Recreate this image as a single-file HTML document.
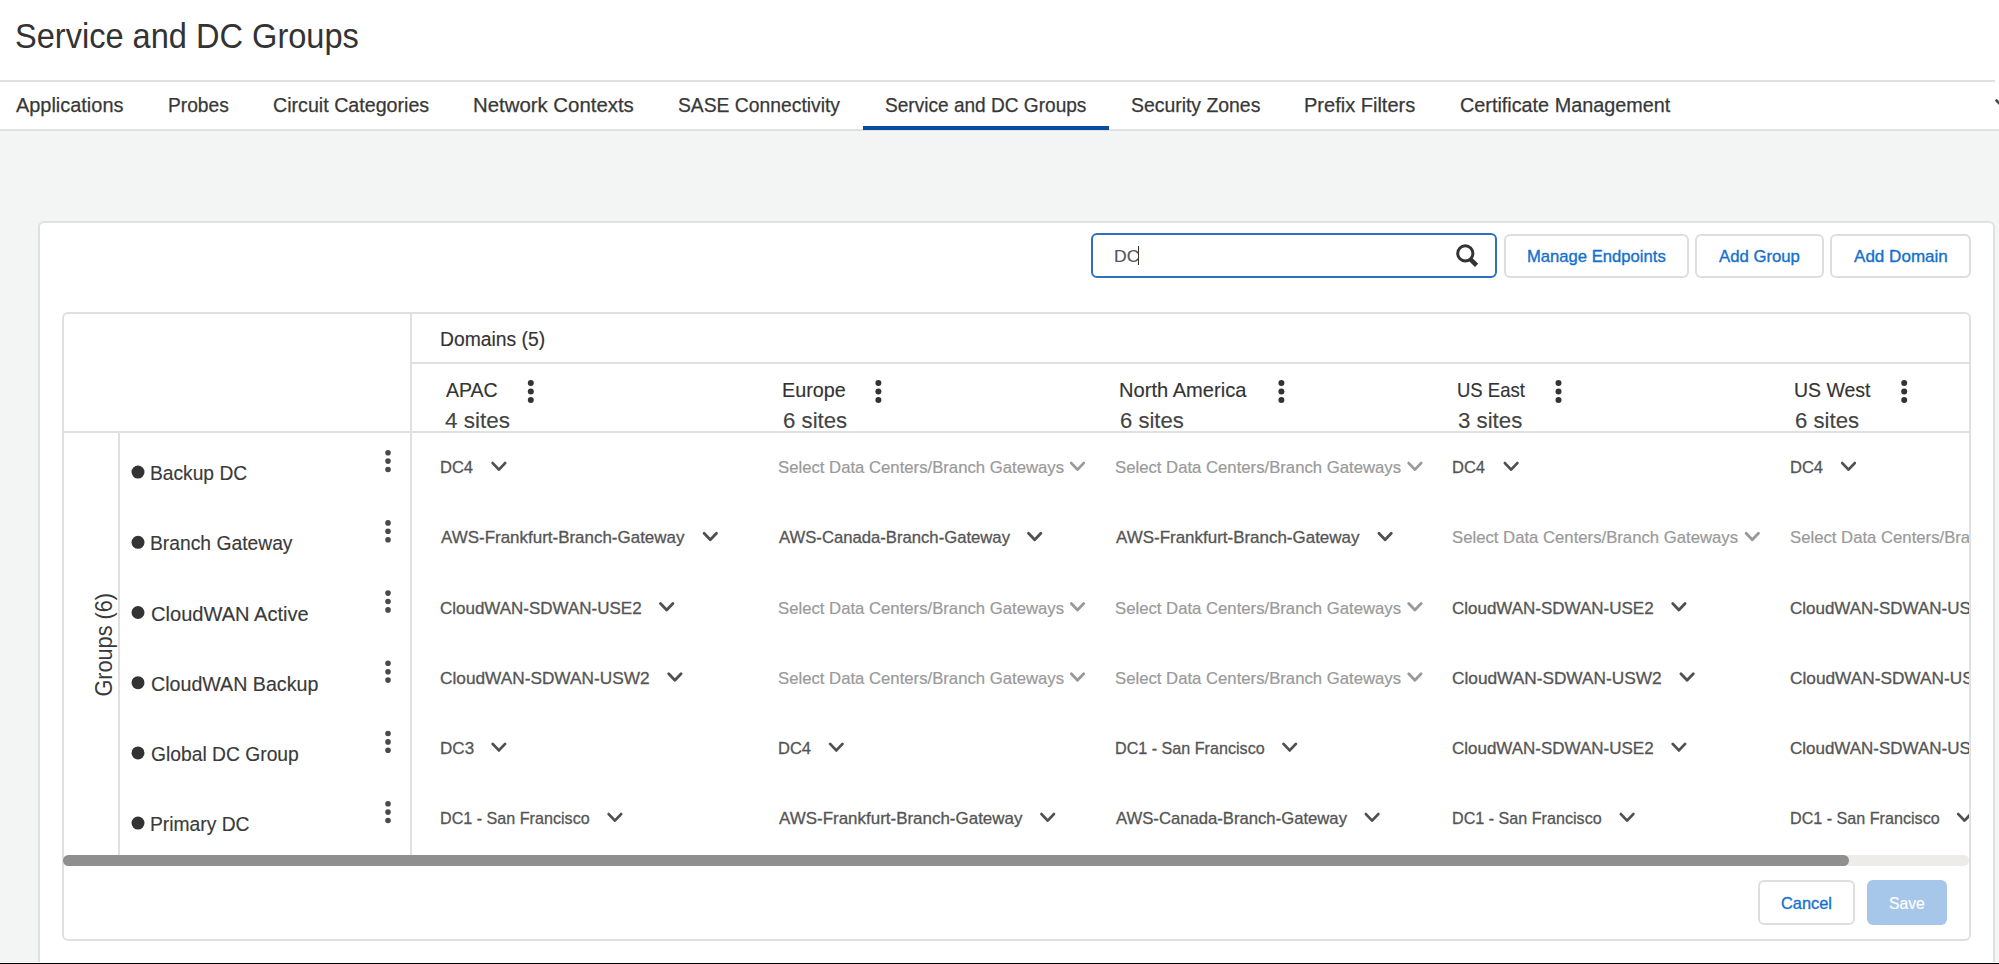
<!DOCTYPE html>
<html><head><meta charset="utf-8"><style>
html,body{margin:0;padding:0;width:1999px;height:964px;overflow:hidden;background:#f3f4f4;position:relative;font-family:'Liberation Sans', sans-serif}
.t{position:absolute;white-space:nowrap;line-height:1;transform-origin:0 0}
.box{position:absolute;box-sizing:border-box}
svg{position:absolute;left:0;top:0}
</style></head><body>
<div class=box style="left:0;top:0;width:1999px;height:130px;background:#fff"></div>
<div class=box style="left:0;top:80px;width:1995px;height:2px;background:#dfe1e1"></div>
<div class=box style="left:0;top:129px;width:1999px;height:2px;background:#dfe1e1"></div>
<div class=box style="left:863px;top:126px;width:246px;height:3.6px;background:#0a4aa0"></div>
<div class=box style="left:37.6px;top:220.6px;width:1957.4px;height:760px;background:#fff;border:2px solid #dfe1e1;border-radius:6px"></div>
<div class=box style="left:1090.8px;top:233px;width:406.3px;height:45px;border:2px solid #2f6fbd;border-radius:6px;background:#fff"></div>
<div class=box style="left:1503.5px;top:233.6px;width:185px;height:44px;border:2px solid #dedede;border-radius:6px"></div>
<div class=box style="left:1695px;top:233.6px;width:129px;height:44px;border:2px solid #dedede;border-radius:6px"></div>
<div class=box style="left:1830px;top:233.6px;width:140.5px;height:44px;border:2px solid #dedede;border-radius:6px"></div>
<div class=box style="left:61.7px;top:311.7px;width:1909.3px;height:629px;border:2px solid #dfe1e1;border-radius:6px"></div>
<div class=box style="left:410.3px;top:313px;width:2px;height:542px;background:#dfe1e1"></div>
<div class=box style="left:411px;top:362.3px;width:1559px;height:2px;background:#dfe1e1"></div>
<div class=box style="left:62px;top:431px;width:1908px;height:2px;background:#dfe1e1"></div>
<div class=box style="left:117.5px;top:432px;width:2px;height:423px;background:#dfe1e1"></div>
<div class=box style="left:63px;top:855px;width:1906px;height:11px;background:#edece9;border-radius:6px"></div>
<div class=box style="left:63px;top:855px;width:1786px;height:11px;background:#8f8f8f;border-radius:6px"></div>
<div class=box style="left:1757.9px;top:879.8px;width:97.2px;height:45.2px;border:2px solid #dedede;border-radius:6px;background:#fff"></div>
<div class=box style="left:1866.8px;top:880.2px;width:80px;height:44.5px;border-radius:6px;background:#a7c7ea"></div>
<div class=box style="left:1137.5px;top:246px;width:1.3px;height:19px;background:#333"></div>
<div class=box style="left:0;top:962px;width:1999px;height:1px;background:#fff"></div>
<div class=box style="left:0;top:963px;width:1999px;height:1px;background:#000"></div>
<div id=cells style="position:absolute;left:0;top:0;width:1969px;height:964px;overflow:hidden">
<div class=t style="left:14.64px;top:18px;font-size:35px;color:#333;-webkit-text-stroke:0px #333;transform:scaleX(0.9303)">Service and DC Groups</div>
<div class=t style="left:15.80px;top:95px;font-size:20.5px;color:#383838;-webkit-text-stroke:0.25px #383838;transform:scaleX(0.9718)">Applications</div>
<div class=t style="left:168.13px;top:95px;font-size:20.5px;color:#383838;-webkit-text-stroke:0.25px #383838;transform:scaleX(0.9355)">Probes</div>
<div class=t style="left:273.34px;top:95px;font-size:20.5px;color:#383838;-webkit-text-stroke:0.25px #383838;transform:scaleX(0.9584)">Circuit Categories</div>
<div class=t style="left:473.01px;top:95px;font-size:20.5px;color:#383838;-webkit-text-stroke:0.25px #383838;transform:scaleX(0.9937)">Network Contexts</div>
<div class=t style="left:678.06px;top:95px;font-size:20.5px;color:#383838;-webkit-text-stroke:0.25px #383838;transform:scaleX(0.9415)">SASE Connectivity</div>
<div class=t style="left:885.07px;top:95px;font-size:20.5px;color:#383838;-webkit-text-stroke:0.25px #383838;transform:scaleX(0.9302)">Service and DC Groups</div>
<div class=t style="left:1131.05px;top:95px;font-size:20.5px;color:#383838;-webkit-text-stroke:0.25px #383838;transform:scaleX(0.9459)">Security Zones</div>
<div class=t style="left:1303.95px;top:95px;font-size:20.5px;color:#383838;-webkit-text-stroke:0.25px #383838;transform:scaleX(0.9766)">Prefix Filters</div>
<div class=t style="left:1459.73px;top:95px;font-size:20.5px;color:#383838;-webkit-text-stroke:0.25px #383838;transform:scaleX(0.9659)">Certificate Management</div>
<div class=t style="left:1526.52px;top:248px;font-size:17px;color:#1470cc;-webkit-text-stroke:0.35px #1470cc;transform:scaleX(0.9786)">Manage Endpoints</div>
<div class=t style="left:1719.20px;top:248px;font-size:17px;color:#1470cc;-webkit-text-stroke:0.35px #1470cc;transform:scaleX(0.9841)">Add Group</div>
<div class=t style="left:1854.10px;top:248px;font-size:17px;color:#1470cc;-webkit-text-stroke:0.35px #1470cc;transform:scaleX(1.0033)">Add Domain</div>
<div class=t style="left:1114.10px;top:249px;font-size:16px;color:#555;-webkit-text-stroke:0.15px #555;transform:scaleX(1.0952)">DC</div>
<div class=t style="left:439.67px;top:329px;font-size:20px;color:#333;-webkit-text-stroke:0.15px #333;transform:scaleX(0.9651)">Domains (5)</div>
<div class=t style="left:445.60px;top:380px;font-size:20.3px;color:#333;-webkit-text-stroke:0.15px #333;transform:scaleX(0.9623)">APAC</div>
<div class=t style="left:444.60px;top:410px;font-size:22.5px;color:#444;-webkit-text-stroke:0.15px #444;transform:scaleX(0.9984)">4 sites</div>
<div class=t style="left:781.85px;top:380px;font-size:20.3px;color:#333;-webkit-text-stroke:0.15px #333;transform:scaleX(0.9742)">Europe</div>
<div class=t style="left:782.81px;top:410px;font-size:22.5px;color:#444;-webkit-text-stroke:0.15px #444;transform:scaleX(0.9873)">6 sites</div>
<div class=t style="left:1119.32px;top:380px;font-size:20.3px;color:#333;-webkit-text-stroke:0.15px #333;transform:scaleX(0.9913)">North America</div>
<div class=t style="left:1120.32px;top:410px;font-size:22.5px;color:#444;-webkit-text-stroke:0.15px #444;transform:scaleX(0.9794)">6 sites</div>
<div class=t style="left:1456.77px;top:380px;font-size:20.3px;color:#333;-webkit-text-stroke:0.15px #333;transform:scaleX(0.9125)">US East</div>
<div class=t style="left:1457.61px;top:410px;font-size:22.5px;color:#444;-webkit-text-stroke:0.15px #444;transform:scaleX(0.9889)">3 sites</div>
<div class=t style="left:1794.08px;top:380px;font-size:20.3px;color:#333;-webkit-text-stroke:0.15px #333;transform:scaleX(0.9610)">US West</div>
<div class=t style="left:1795.01px;top:410px;font-size:22.5px;color:#444;-webkit-text-stroke:0.15px #444;transform:scaleX(0.9857)">6 sites</div>
<div class=t style="left:150.33px;top:463px;font-size:20.5px;color:#3a3a3a;-webkit-text-stroke:0.15px #3a3a3a;transform:scaleX(0.9366)">Backup DC</div>
<div class=t style="left:150.32px;top:533px;font-size:20.5px;color:#3a3a3a;-webkit-text-stroke:0.15px #3a3a3a;transform:scaleX(0.9403)">Branch Gateway</div>
<div class=t style="left:151.22px;top:604px;font-size:20.5px;color:#3a3a3a;-webkit-text-stroke:0.15px #3a3a3a;transform:scaleX(0.9799)">CloudWAN Active</div>
<div class=t style="left:151.24px;top:674px;font-size:20.5px;color:#3a3a3a;-webkit-text-stroke:0.15px #3a3a3a;transform:scaleX(0.9578)">CloudWAN Backup</div>
<div class=t style="left:151.26px;top:744px;font-size:20.5px;color:#3a3a3a;-webkit-text-stroke:0.15px #3a3a3a;transform:scaleX(0.9400)">Global DC Group</div>
<div class=t style="left:150.32px;top:814px;font-size:20.5px;color:#3a3a3a;-webkit-text-stroke:0.15px #3a3a3a;transform:scaleX(0.9398)">Primary DC</div>
<div class=t style="left:440.13px;top:459px;font-size:17px;color:#555;-webkit-text-stroke:0.3px #555;transform:scaleX(0.9697)">DC4</div>
<div class=t style="left:777.52px;top:459px;font-size:17px;color:#9a9a9a;-webkit-text-stroke:0.22px #9a9a9a;transform:scaleX(0.9827)">Select Data Centers/Branch Gateways</div>
<div class=t style="left:1114.92px;top:459px;font-size:17px;color:#9a9a9a;-webkit-text-stroke:0.22px #9a9a9a;transform:scaleX(0.9827)">Select Data Centers/Branch Gateways</div>
<div class=t style="left:1452.33px;top:459px;font-size:17px;color:#555;-webkit-text-stroke:0.3px #555;transform:scaleX(0.9697)">DC4</div>
<div class=t style="left:1789.73px;top:459px;font-size:17px;color:#555;-webkit-text-stroke:0.3px #555;transform:scaleX(0.9697)">DC4</div>
<div class=t style="left:441.10px;top:529px;font-size:17px;color:#555;-webkit-text-stroke:0.3px #555;transform:scaleX(0.9975)">AWS-Frankfurt-Branch-Gateway</div>
<div class=t style="left:778.50px;top:529px;font-size:17px;color:#555;-webkit-text-stroke:0.3px #555;transform:scaleX(0.9804)">AWS-Canada-Branch-Gateway</div>
<div class=t style="left:1115.90px;top:529px;font-size:17px;color:#555;-webkit-text-stroke:0.3px #555;transform:scaleX(0.9975)">AWS-Frankfurt-Branch-Gateway</div>
<div class=t style="left:1452.32px;top:529px;font-size:17px;color:#9a9a9a;-webkit-text-stroke:0.22px #9a9a9a;transform:scaleX(0.9827)">Select Data Centers/Branch Gateways</div>
<div class=t style="left:1789.72px;top:529px;font-size:17px;color:#9a9a9a;-webkit-text-stroke:0.22px #9a9a9a;transform:scaleX(0.9827)">Select Data Centers/Branch Gateways</div>
<div class=t style="left:440.10px;top:600px;font-size:17px;color:#555;-webkit-text-stroke:0.3px #555;transform:scaleX(0.9990)">CloudWAN-SDWAN-USE2</div>
<div class=t style="left:777.52px;top:600px;font-size:17px;color:#9a9a9a;-webkit-text-stroke:0.22px #9a9a9a;transform:scaleX(0.9827)">Select Data Centers/Branch Gateways</div>
<div class=t style="left:1114.92px;top:600px;font-size:17px;color:#9a9a9a;-webkit-text-stroke:0.22px #9a9a9a;transform:scaleX(0.9827)">Select Data Centers/Branch Gateways</div>
<div class=t style="left:1452.30px;top:600px;font-size:17px;color:#555;-webkit-text-stroke:0.3px #555;transform:scaleX(0.9990)">CloudWAN-SDWAN-USE2</div>
<div class=t style="left:1789.70px;top:600px;font-size:17px;color:#555;-webkit-text-stroke:0.3px #555;transform:scaleX(0.9990)">CloudWAN-SDWAN-USE2</div>
<div class=t style="left:440.09px;top:670px;font-size:17px;color:#555;-webkit-text-stroke:0.3px #555;transform:scaleX(1.0146)">CloudWAN-SDWAN-USW2</div>
<div class=t style="left:777.52px;top:670px;font-size:17px;color:#9a9a9a;-webkit-text-stroke:0.22px #9a9a9a;transform:scaleX(0.9827)">Select Data Centers/Branch Gateways</div>
<div class=t style="left:1114.92px;top:670px;font-size:17px;color:#9a9a9a;-webkit-text-stroke:0.22px #9a9a9a;transform:scaleX(0.9827)">Select Data Centers/Branch Gateways</div>
<div class=t style="left:1452.29px;top:670px;font-size:17px;color:#555;-webkit-text-stroke:0.3px #555;transform:scaleX(1.0146)">CloudWAN-SDWAN-USW2</div>
<div class=t style="left:1789.69px;top:670px;font-size:17px;color:#555;-webkit-text-stroke:0.3px #555;transform:scaleX(1.0146)">CloudWAN-SDWAN-USW2</div>
<div class=t style="left:440.10px;top:740px;font-size:17px;color:#555;-webkit-text-stroke:0.3px #555;transform:scaleX(1.0000)">DC3</div>
<div class=t style="left:777.53px;top:740px;font-size:17px;color:#555;-webkit-text-stroke:0.3px #555;transform:scaleX(0.9697)">DC4</div>
<div class=t style="left:1114.95px;top:740px;font-size:17px;color:#555;-webkit-text-stroke:0.3px #555;transform:scaleX(0.9487)">DC1 - San Francisco</div>
<div class=t style="left:1452.30px;top:740px;font-size:17px;color:#555;-webkit-text-stroke:0.3px #555;transform:scaleX(0.9990)">CloudWAN-SDWAN-USE2</div>
<div class=t style="left:1789.70px;top:740px;font-size:17px;color:#555;-webkit-text-stroke:0.3px #555;transform:scaleX(0.9990)">CloudWAN-SDWAN-USE2</div>
<div class=t style="left:440.15px;top:810px;font-size:17px;color:#555;-webkit-text-stroke:0.3px #555;transform:scaleX(0.9487)">DC1 - San Francisco</div>
<div class=t style="left:778.50px;top:810px;font-size:17px;color:#555;-webkit-text-stroke:0.3px #555;transform:scaleX(0.9975)">AWS-Frankfurt-Branch-Gateway</div>
<div class=t style="left:1115.90px;top:810px;font-size:17px;color:#555;-webkit-text-stroke:0.3px #555;transform:scaleX(0.9804)">AWS-Canada-Branch-Gateway</div>
<div class=t style="left:1452.35px;top:810px;font-size:17px;color:#555;-webkit-text-stroke:0.3px #555;transform:scaleX(0.9487)">DC1 - San Francisco</div>
<div class=t style="left:1789.75px;top:810px;font-size:17px;color:#555;-webkit-text-stroke:0.3px #555;transform:scaleX(0.9487)">DC1 - San Francisco</div>
<div class=t style="left:1781.04px;top:895px;font-size:17px;color:#1470cc;-webkit-text-stroke:0.35px #1470cc;transform:scaleX(0.9627)">Cancel</div>
<div class=t style="left:1888.78px;top:895px;font-size:17px;color:#ffffff;-webkit-text-stroke:0.15px #ffffff;transform:scaleX(0.9216)">Save</div>
<svg width="1999" height="964" viewBox="0 0 1999 964">
<g fill="none" stroke-width="2.8" stroke-linecap="round" stroke-linejoin="round"><polyline points='492.7,463.1 498.9,469.6 505.1,463.1' stroke='#505050'/><polyline points='1071.3,463.1 1077.5,469.6 1083.7,463.1' stroke='#999'/><polyline points='1408.7,463.1 1414.9,469.6 1421.1,463.1' stroke='#999'/><polyline points='1504.9,463.1 1511.1,469.6 1517.3,463.1' stroke='#505050'/><polyline points='1842.3,463.1 1848.5,469.6 1854.7,463.1' stroke='#505050'/><polyline points='704.1,533.3 710.3,539.8 716.5,533.3' stroke='#505050'/><polyline points='1028.5,533.3 1034.7,539.8 1040.9,533.3' stroke='#505050'/><polyline points='1378.9,533.3 1385.1,539.8 1391.3,533.3' stroke='#505050'/><polyline points='1746.1,533.3 1752.3,539.8 1758.5,533.3' stroke='#999'/><polyline points='2083.5,533.3 2089.7,539.8 2095.9,533.3' stroke='#999'/><polyline points='660.5,603.5 666.7,610.0 672.9,603.5' stroke='#505050'/><polyline points='1071.3,603.5 1077.5,610.0 1083.7,603.5' stroke='#999'/><polyline points='1408.7,603.5 1414.9,610.0 1421.1,603.5' stroke='#999'/><polyline points='1672.7,603.5 1678.9,610.0 1685.1,603.5' stroke='#505050'/><polyline points='2010.1,603.5 2016.3,610.0 2022.5,603.5' stroke='#505050'/><polyline points='668.7,673.7 674.9,680.2 681.1,673.7' stroke='#505050'/><polyline points='1071.3,673.7 1077.5,680.2 1083.7,673.7' stroke='#999'/><polyline points='1408.7,673.7 1414.9,680.2 1421.1,673.7' stroke='#999'/><polyline points='1680.9,673.7 1687.1,680.2 1693.3,673.7' stroke='#505050'/><polyline points='2018.3,673.7 2024.5,680.2 2030.7,673.7' stroke='#505050'/><polyline points='492.7,743.9 498.9,750.4 505.1,743.9' stroke='#505050'/><polyline points='830.1,743.9 836.3,750.4 842.5,743.9' stroke='#505050'/><polyline points='1283.5,743.9 1289.7,750.4 1295.9,743.9' stroke='#505050'/><polyline points='1672.7,743.9 1678.9,750.4 1685.1,743.9' stroke='#505050'/><polyline points='2010.1,743.9 2016.3,750.4 2022.5,743.9' stroke='#505050'/><polyline points='608.7,814.1 614.9,820.6 621.1,814.1' stroke='#505050'/><polyline points='1041.5,814.1 1047.7,820.6 1053.9,814.1' stroke='#505050'/><polyline points='1365.9,814.1 1372.1,820.6 1378.3,814.1' stroke='#505050'/><polyline points='1620.9,814.1 1627.1,820.6 1633.3,814.1' stroke='#505050'/><polyline points='1958.3,814.1 1964.5,820.6 1970.7,814.1' stroke='#505050'/></g>
<circle cx='138' cy='472.1' r='6.5' fill='#333'/><circle cx='138' cy='542.3' r='6.5' fill='#333'/><circle cx='138' cy='612.5' r='6.5' fill='#333'/><circle cx='138' cy='682.7' r='6.5' fill='#333'/><circle cx='138' cy='752.9' r='6.5' fill='#333'/><circle cx='138' cy='823.1' r='6.5' fill='#333'/><circle cx='388.0' cy='452.7' r='2.8' fill='#4a4a4a'/><circle cx='388.0' cy='461.1' r='2.8' fill='#4a4a4a'/><circle cx='388.0' cy='469.5' r='2.8' fill='#4a4a4a'/><circle cx='388.0' cy='522.9' r='2.8' fill='#4a4a4a'/><circle cx='388.0' cy='531.3' r='2.8' fill='#4a4a4a'/><circle cx='388.0' cy='539.7' r='2.8' fill='#4a4a4a'/><circle cx='388.0' cy='593.1' r='2.8' fill='#4a4a4a'/><circle cx='388.0' cy='601.5' r='2.8' fill='#4a4a4a'/><circle cx='388.0' cy='609.9' r='2.8' fill='#4a4a4a'/><circle cx='388.0' cy='663.3' r='2.8' fill='#4a4a4a'/><circle cx='388.0' cy='671.7' r='2.8' fill='#4a4a4a'/><circle cx='388.0' cy='680.1' r='2.8' fill='#4a4a4a'/><circle cx='388.0' cy='733.5' r='2.8' fill='#4a4a4a'/><circle cx='388.0' cy='741.9' r='2.8' fill='#4a4a4a'/><circle cx='388.0' cy='750.3' r='2.8' fill='#4a4a4a'/><circle cx='388.0' cy='803.7' r='2.8' fill='#4a4a4a'/><circle cx='388.0' cy='812.1' r='2.8' fill='#4a4a4a'/><circle cx='388.0' cy='820.5' r='2.8' fill='#4a4a4a'/><circle cx='530.8' cy='383.1' r='3.0' fill='#333'/><circle cx='530.8' cy='391.5' r='3.0' fill='#333'/><circle cx='530.8' cy='399.9' r='3.0' fill='#333'/><circle cx='878.4' cy='383.1' r='3.0' fill='#333'/><circle cx='878.4' cy='391.5' r='3.0' fill='#333'/><circle cx='878.4' cy='399.9' r='3.0' fill='#333'/><circle cx='1281.4' cy='383.1' r='3.0' fill='#333'/><circle cx='1281.4' cy='391.5' r='3.0' fill='#333'/><circle cx='1281.4' cy='399.9' r='3.0' fill='#333'/><circle cx='1558.5' cy='383.1' r='3.0' fill='#333'/><circle cx='1558.5' cy='391.5' r='3.0' fill='#333'/><circle cx='1558.5' cy='399.9' r='3.0' fill='#333'/><circle cx='1904.2' cy='383.1' r='3.0' fill='#333'/><circle cx='1904.2' cy='391.5' r='3.0' fill='#333'/><circle cx='1904.2' cy='399.9' r='3.0' fill='#333'/>
</svg>
</div>
<svg width="1999" height="964" viewBox="0 0 1999 964">
<circle cx="1465.3" cy="253.4" r="7.6" fill="none" stroke="#333" stroke-width="3"/>
<line x1="1470.5" y1="259.3" x2="1476.6" y2="265.3" stroke="#333" stroke-width="4.6"/>
<line x1="1996.5" y1="100.5" x2="2003" y2="107.5" stroke="#4a4a4a" stroke-width="2.6" stroke-linecap="round"/>
</svg>
<div class=t style="left:0;top:0;font-size:24.5px;color:#3a3a3a;transform-origin:0 0;transform:translate(91.7px,696.6px) rotate(-90deg) scaleX(0.8852)">Groups (6)</div>
</body></html>
